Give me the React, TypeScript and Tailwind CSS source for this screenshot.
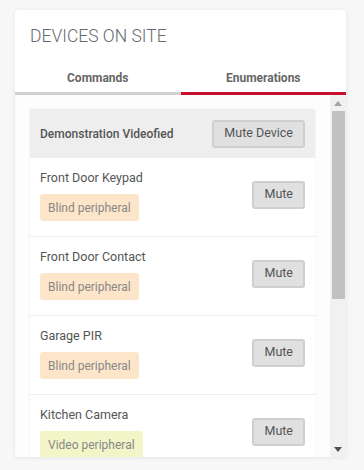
const devices = [
  { name: "Front Door Keypad", type: "Blind peripheral", tone: "bg-[#fde5c9]" },
  { name: "Front Door Contact", type: "Blind peripheral", tone: "bg-[#fde5c9]" },
  { name: "Garage PIR", type: "Blind peripheral", tone: "bg-[#fde5c9]" },
  { name: "Kitchen Camera", type: "Video peripheral", tone: "bg-[#f2f5c8]" },
];

function MuteButton({ label }: { label: string }) {
  return (
    <button className="h-[28px] px-[10px] rounded-[3px] border-2 border-[#cfcfcf] bg-[#e0e0e0] text-[12.5px] text-[#555] leading-none">
      {label}
    </button>
  );
}

export default function App() {
  return (
    <div className="w-[364px] h-[470px] bg-[#f7f7f7] pt-[10px] px-[15px] overflow-hidden" style={{ fontFamily: "Roboto, 'Liberation Sans', sans-serif" }}>
      <div className="w-[331px] h-[447px] bg-white rounded-[4px] shadow-[0_1px_4px_rgba(0,0,0,0.08)] flex flex-col overflow-hidden">
        {/* Title */}
        <div className="px-[15px] pt-[14px] h-[56px]">
          <h2 className="text-[17.5px] font-light text-[#666a70] leading-[24px]">DEVICES ON SITE</h2>
        </div>

        {/* Tabs */}
        <div className="flex h-[29px]">
          <div className="flex-1 flex items-center justify-center border-b-[3px] border-[#d0d0d0] text-[12px] font-bold text-[#666] pb-[2px]">
            Commands
          </div>
          <div className="flex-1 flex items-center justify-center border-b-[3px] border-[#c8102e] text-[12px] font-bold text-[#666] pb-[2px]">
            Enumerations
          </div>
        </div>

        {/* Scroll area */}
        <div className="flex-1 flex min-h-0">
          <div className="flex-1 overflow-hidden pt-[14px] pl-[15px] pr-[15px] bg-[#fdfdfd]">
            <div className="bg-white shadow-[0_0_3px_rgba(0,0,0,0.06)]">
              <div className="h-[49px] bg-[#eeeeee] flex items-center justify-between px-[10px]">
                <span className="text-[12px] font-medium text-[#555]">Demonstration Videofied</span>
                <MuteButton label="Mute Device" />
              </div>
              {devices.map((d) => (
                <div key={d.name} className="h-[79px] border-b border-[#ececec] flex items-center justify-between px-[10px]">
                  <div className="flex flex-col items-start self-start pt-[12px]">
                    <span className="text-[12.5px] text-[#555] leading-[16px]">{d.name}</span>
                    <span className={`mt-[8px] h-[27px] px-[8px] rounded-[3px] flex items-center text-[12px] text-[#888] ${d.tone}`}>
                      {d.type}
                    </span>
                  </div>
                  <div className="-mt-[5px]">
                    <MuteButton label="Mute" />
                  </div>
                </div>
              ))}
            </div>
          </div>

          {/* Scrollbar */}
          <div className="w-[16px] bg-[#f1f1f1] flex flex-col items-center">
            <div className="h-[16px] flex items-center justify-center">
              <svg width="8" height="5" viewBox="0 0 8 5"><path d="M4 0 L8 5 L0 5 Z" fill="#a3a3a3" /></svg>
            </div>
            <div className="w-[13px] h-[188px] bg-[#c1c1c1]" />
            <div className="flex-1" />
            <div className="h-[16px] flex items-center justify-center">
              <svg width="8" height="5" viewBox="0 0 8 5"><path d="M0 0 L8 0 L4 5 Z" fill="#505050" /></svg>
            </div>
          </div>
        </div>
      </div>
    </div>
  );
}
